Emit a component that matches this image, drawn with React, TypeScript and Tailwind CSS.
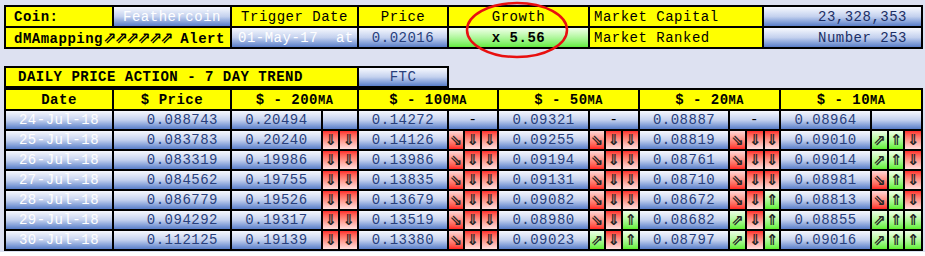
import React from "react";

const mono = "font-['Liberation_Mono','Courier_New',monospace] tracking-[0.5px]";
const td = "border-2 border-black h-5 p-0 leading-none whitespace-pre";
const yellow = "bg-[#ffff00] text-black font-bold";
const blue = "bg-linear-to-b from-[#f7f9fe] via-[#c4d1ee] to-[#5a7ec8]";
const num = "text-[#283f7c]";

// red: falling, green: rising
const arrowCell: Record<string, { glyph: string; bg: string }> = {
  d: { glyph: "⇓", bg: "bg-linear-to-b from-[#ff2b2b] to-[#ffdede]" },
  dr: { glyph: "⇘", bg: "bg-linear-to-b from-[#ffd6d6] to-[#ff2424]" },
  u: { glyph: "⇑", bg: "bg-linear-to-b from-[#eeffe6] to-[#5ef02a]" },
  ur: { glyph: "⇗", bg: "bg-linear-to-b from-[#eeffe6] to-[#5ef02a]" },
};

function Arrows({ list }: { list: string[] }) {
  return (
    <>
      {list.map((a, i) => (
        <td key={i} className={`${td} ${arrowCell[a].bg} text-center`}>
          <span className="font-['DejaVu_Sans',sans-serif] text-[15px] font-bold tracking-normal text-[#262626]">{arrowCell[a].glyph}</span>
        </td>
      ))}
    </>
  );
}

const rows = [
  { date: "25-Jul-18", price: "0.083783", m200: "0.20240", a200: ["d", "d"], m100: "0.14126", a100: ["dr", "d", "d"], m50: "0.09255", a50: ["dr", "d", "d"], m20: "0.08819", a20: ["dr", "d", "d"], m10: "0.09010", a10: ["ur", "u", "d"] },
  { date: "26-Jul-18", price: "0.083319", m200: "0.19986", a200: ["d", "d"], m100: "0.13986", a100: ["dr", "d", "d"], m50: "0.09194", a50: ["dr", "d", "d"], m20: "0.08761", a20: ["dr", "d", "d"], m10: "0.09014", a10: ["ur", "u", "d"] },
  { date: "27-Jul-18", price: "0.084562", m200: "0.19755", a200: ["d", "d"], m100: "0.13835", a100: ["dr", "d", "d"], m50: "0.09131", a50: ["dr", "d", "d"], m20: "0.08710", a20: ["dr", "d", "d"], m10: "0.08981", a10: ["dr", "u", "d"] },
  { date: "28-Jul-18", price: "0.086779", m200: "0.19526", a200: ["d", "d"], m100: "0.13679", a100: ["dr", "d", "d"], m50: "0.09082", a50: ["dr", "d", "d"], m20: "0.08672", a20: ["dr", "d", "u"], m10: "0.08813", a10: ["dr", "u", "d"] },
  { date: "29-Jul-18", price: "0.094292", m200: "0.19317", a200: ["d", "d"], m100: "0.13519", a100: ["dr", "d", "d"], m50: "0.08980", a50: ["dr", "d", "u"], m20: "0.08682", a20: ["ur", "d", "u"], m10: "0.08855", a10: ["ur", "u", "u"] },
  { date: "30-Jul-18", price: "0.112125", m200: "0.19139", a200: ["d", "d"], m100: "0.13380", a100: ["dr", "d", "d"], m50: "0.09023", a50: ["ur", "d", "u"], m20: "0.08797", a20: ["ur", "d", "u"], m10: "0.09016", a10: ["ur", "u", "u"] },
];

const dataCols = [108, 118, 91, 17, 19, 90, 16, 17, 17, 91, 16, 17, 17, 90, 17, 18, 16, 91, 17, 16, 18];

function MA({ n }: { n: string }) {
  return (
    <>
      $ - {n}
      <span className="text-[12px]">MA</span>
    </>
  );
}

export default function App() {
  return (
    <div className={`h-[252px] w-[925px] bg-[#dde1f1] pl-[4px] pt-[5px] text-[14px] ${mono}`}>
      <div className="relative w-[917px]">
        <table className="w-[917px] table-fixed border-collapse">
          <colgroup>
            {[108, 118, 127, 90, 141, 174, 159].map((w, i) => (
              <col key={i} style={{ width: w }} />
            ))}
          </colgroup>
          <tbody>
            <tr className="h-[21px]">
              <td className={`${td} ${yellow} pl-2 text-left`}>Coin:</td>
              <td className={`${td} ${blue} text-center text-white`}>Feathercoin</td>
              <td className={`${td} ${yellow} text-center font-normal`}>Trigger Date</td>
              <td className={`${td} ${yellow} text-center font-normal`}>Price</td>
              <td className={`${td} ${yellow} text-center font-normal`}>Growth</td>
              <td className={`${td} ${yellow} pl-1 text-left font-normal`}>Market Capital</td>
              <td className={`${td} ${blue} pr-[14px] text-right text-[#1c2f66]`}>23,328,353</td>
            </tr>
            <tr className="h-[21px]">
              <td colSpan={2} className={`${td} ${yellow} pl-2 text-left`}>
                dMAmapping<span className="font-['DejaVu_Sans',sans-serif] text-[16px] font-bold tracking-[-2px]">⇗⇗⇗⇗⇗⇗</span> Alert
              </td>
              <td className={`${td} ${blue} pl-[6px] text-left text-white`}>01-May-17  at</td>
              <td className={`${td} ${blue} text-center ${num}`}>0.02016</td>
              <td className={`${td} bg-linear-to-b from-[#f0ffe8] to-[#62ec3c] text-center font-bold text-black`}>x 5.56</td>
              <td className={`${td} ${yellow} pl-1 text-left font-normal`}>Market Ranked</td>
              <td className={`${td} ${blue} pr-[14px] text-right text-[#1c2f66]`}>Number 253</td>
            </tr>
          </tbody>
        </table>
        <svg className="pointer-events-none absolute left-[461px] top-[-4px]" width="104" height="58" viewBox="0 0 104 58">
          <ellipse cx="52" cy="29" rx="50" ry="27" fill="none" stroke="#e81010" strokeWidth="2.5" />
        </svg>
      </div>

      <table className="mt-[17px] w-[443px] table-fixed border-collapse">
        <colgroup>
          <col style={{ width: 353 }} />
          <col style={{ width: 90 }} />
        </colgroup>
        <tbody>
          <tr>
            <td className={`${td} ${yellow} pl-[12px] text-left`}>DAILY PRICE ACTION - 7 DAY TREND</td>
            <td className={`${td} ${blue} text-center ${num}`}>FTC</td>
          </tr>
        </tbody>
      </table>

      <table className="w-[917px] table-fixed border-collapse">
        <colgroup>
          {dataCols.map((w, i) => (
            <col key={i} style={{ width: w }} />
          ))}
        </colgroup>
        <tbody>
          <tr className="h-[21px]">
            <td className={`${td} ${yellow} text-center`}>Date</td>
            <td className={`${td} ${yellow} text-center`}>$ Price</td>
            <td colSpan={3} className={`${td} ${yellow} text-center`}><MA n="200" /></td>
            <td colSpan={4} className={`${td} ${yellow} text-center`}><MA n="100" /></td>
            <td colSpan={4} className={`${td} ${yellow} text-center`}><MA n="50" /></td>
            <td colSpan={4} className={`${td} ${yellow} text-center`}><MA n="20" /></td>
            <td colSpan={4} className={`${td} ${yellow} text-center`}><MA n="10" /></td>
          </tr>
          <tr>
            <td className={`${td} ${blue} text-center text-white`}>24-Jul-18</td>
            <td className={`${td} ${blue} pr-3 text-right ${num}`}>0.088743</td>
            <td className={`${td} ${blue} text-center ${num}`}>0.20494</td>
            <td colSpan={2} className={`${td} ${blue}`} />
            <td className={`${td} ${blue} text-center ${num}`}>0.14272</td>
            <td colSpan={3} className={`${td} ${blue} text-center text-black`}>-</td>
            <td className={`${td} ${blue} text-center ${num}`}>0.09321</td>
            <td colSpan={3} className={`${td} ${blue} text-center text-black`}>-</td>
            <td className={`${td} ${blue} text-center ${num}`}>0.08887</td>
            <td colSpan={3} className={`${td} ${blue} text-center text-black`}>-</td>
            <td className={`${td} ${blue} text-center ${num}`}>0.08964</td>
            <td colSpan={3} className={`${td} ${blue}`} />
          </tr>
          {rows.map((r) => (
            <tr key={r.date}>
              <td className={`${td} ${blue} text-center text-white`}>{r.date}</td>
              <td className={`${td} ${blue} pr-3 text-right ${num}`}>{r.price}</td>
              <td className={`${td} ${blue} text-center ${num}`}>{r.m200}</td>
              <Arrows list={r.a200} />
              <td className={`${td} ${blue} text-center ${num}`}>{r.m100}</td>
              <Arrows list={r.a100} />
              <td className={`${td} ${blue} text-center ${num}`}>{r.m50}</td>
              <Arrows list={r.a50} />
              <td className={`${td} ${blue} text-center ${num}`}>{r.m20}</td>
              <Arrows list={r.a20} />
              <td className={`${td} ${blue} text-center ${num}`}>{r.m10}</td>
              <Arrows list={r.a10} />
            </tr>
          ))}
        </tbody>
      </table>
    </div>
  );
}
